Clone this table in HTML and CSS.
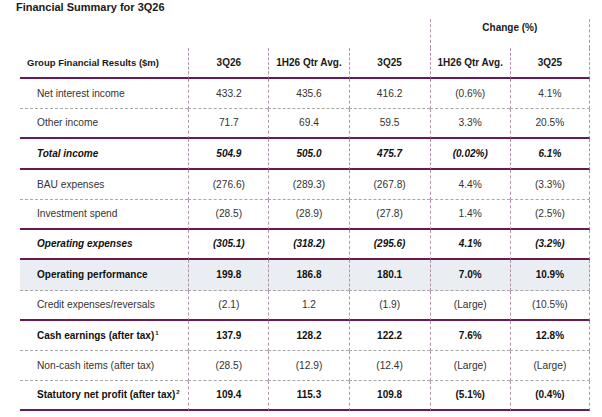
FILE: index.html
```html
<!DOCTYPE html>
<html>
<head>
<meta charset="utf-8">
<link rel="stylesheet" href="styles.css">
</head>
<body>
<h1 class="title">Financial Summary for 3Q26</h1>
<table class="fin">
  <colgroup>
    <col class="c-label"><col class="c-num"><col class="c-num"><col class="c-num3"><col class="c-num"><col class="c-num">
  </colgroup>
  <thead>
    <tr class="group">
      <th></th><th></th><th></th><th></th>
      <th class="change" colspan="2">Change (%)</th>
    </tr>
    <tr class="head">
      <th class="lab">Group Financial Results ($m)</th>
      <th class="v">3Q26</th>
      <th class="v">1H26 Qtr Avg.</th>
      <th class="v">3Q25</th>
      <th class="v">1H26 Qtr Avg.</th>
      <th class="v last">3Q25</th>
    </tr>
  </thead>
  <tbody>
    <tr class="dot">
      <td class="lab">Net interest income</td><td class="v">433.2</td><td class="v">435.6</td><td class="v">416.2</td><td class="v">(0.6%)</td><td class="v last">4.1%</td>
    </tr>
    <tr class="thick">
      <td class="lab">Other income</td><td class="v">71.7</td><td class="v">69.4</td><td class="v">59.5</td><td class="v">3.3%</td><td class="v last">20.5%</td>
    </tr>
    <tr class="thick total tall">
      <td class="lab">Total income</td><td class="v">504.9</td><td class="v">505.0</td><td class="v">475.7</td><td class="v">(0.02%)</td><td class="v last">6.1%</td>
    </tr>
    <tr class="dot">
      <td class="lab">BAU expenses</td><td class="v">(276.6)</td><td class="v">(289.3)</td><td class="v">(267.8)</td><td class="v">4.4%</td><td class="v last">(3.3%)</td>
    </tr>
    <tr class="thick">
      <td class="lab">Investment spend</td><td class="v">(28.5)</td><td class="v">(28.9)</td><td class="v">(27.8)</td><td class="v">1.4%</td><td class="v last">(2.5%)</td>
    </tr>
    <tr class="thick total">
      <td class="lab">Operating expenses</td><td class="v">(305.1)</td><td class="v">(318.2)</td><td class="v">(295.6)</td><td class="v">4.1%</td><td class="v last">(3.2%)</td>
    </tr>
    <tr class="dot strong shaded tall">
      <td class="lab">Operating performance</td><td class="v">199.8</td><td class="v">186.8</td><td class="v">180.1</td><td class="v">7.0%</td><td class="v last">10.9%</td>
    </tr>
    <tr class="thick">
      <td class="lab">Credit expenses/reversals</td><td class="v">(2.1)</td><td class="v">1.2</td><td class="v">(1.9)</td><td class="v">(Large)</td><td class="v last">(10.5%)</td>
    </tr>
    <tr class="dot strong">
      <td class="lab">Cash earnings (after tax)<sup>1</sup></td><td class="v">137.9</td><td class="v">128.2</td><td class="v">122.2</td><td class="v">7.6%</td><td class="v last">12.8%</td>
    </tr>
    <tr class="dot">
      <td class="lab">Non-cash items (after tax)</td><td class="v">(28.5)</td><td class="v">(12.9)</td><td class="v">(12.4)</td><td class="v">(Large)</td><td class="v last">(Large)</td>
    </tr>
    <tr class="thick strong">
      <td class="lab">Statutory net profit (after tax)<sup>2</sup></td><td class="v">109.4</td><td class="v">115.3</td><td class="v">109.8</td><td class="v">(5.1%)</td><td class="v last">(0.4%)</td>
    </tr>
  </tbody>
</table>
</body>
</html>
```
FILE: styles.css
```css
html, body {
  margin: 0;
  padding: 0;
  background: #ffffff;
}
body {
  font-family: "Liberation Sans", Arial, sans-serif;
  color: #333333;
}
.title {
  margin: 0;
  padding: 1px 0 0 16px;
  font-size: 11px;
  line-height: 13px;
  font-weight: bold;
  color: #1a1a1a;
}
.fin {
  margin: 5px 0 0 20px;
  border-collapse: separate;
  border-spacing: 0;
  table-layout: fixed;
  width: 570px;
  font-size: 10.2px;
}
.c-label { width: 168px; }
.c-num { width: 80px; }
.c-num3 { width: 81px; }
.fin th, .fin td {
  padding: 0;
  line-height: 12px;
}
.group th {
  height: 29px;
  vertical-align: top;
}
.group .change {
  padding-top: 3px;
  height: 26px;
  font-size: 10px;
  font-weight: bold;
  color: #1a1a1a;
  border-left: 1px dashed #b592ab;
  border-right: 1px dashed #b592ab;
}
.head th {
  height: 29px;
  font-size: 10px;
  font-weight: bold;
  color: #1a1a1a;
  border-bottom: 2px solid #6a1a52;
  vertical-align: middle;
}
.head .lab {
  text-align: left;
  padding-left: 7px;
  font-size: 9.5px;
}
.v {
  text-align: center;
  border-left: 1px dashed #b592ab;
}
.v.last {
  border-right: 1px dashed #b592ab;
}
.fin td.lab {
  padding-left: 17px;
  text-align: left;
}
tbody td {
  vertical-align: middle;
}
.dot td {
  height: 29px;
  border-bottom: 1px dashed #a8a8a8;
}
.thick td {
  height: 28px;
  border-bottom: 2px solid #6a1a52;
}
.thick.tall td {
  height: 29px;
}
.dot.tall td {
  height: 30px;
}
.total td {
  font-weight: bold;
  font-style: italic;
  font-size: 10px;
  color: #111111;
}
.strong td {
  font-weight: bold;
  font-size: 10px;
  color: #111111;
}
.shaded td {
  background: #eaeef2;
}
sup {
  font-size: 6px;
  line-height: 0;
  vertical-align: 4px;
  margin-left: 1px;
}
```
